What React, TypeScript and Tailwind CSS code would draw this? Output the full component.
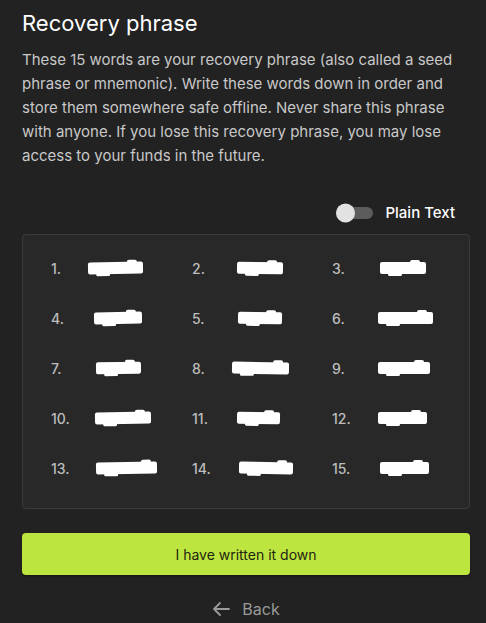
import { useState } from 'react'

// redacted words: [blob width, offset from number column start]
const WORDS: [number, number][] = [
  [55, 37], [46, 45], [46, 48],
  [48, 43], [44, 46], [55, 46],
  [45, 45], [57, 40], [52, 46],
  [56, 44], [43, 45], [49, 46],
  [61, 45], [54, 47], [49, 48],
]

function Blob({ w, ml, seed }: { w: number; ml: number; seed: number }) {
  const tilt = seed % 3 === 0 ? '-rotate-1' : seed % 3 === 1 ? 'rotate-1' : ''
  return (
    <span className={`relative block h-[12px] bg-white rounded-[2px] ${tilt}`} style={{ width: w, marginLeft: ml }}>
      <span className="absolute -top-[2px] right-[6px] h-[4px] w-[10px] bg-white rounded-sm" />
      <span className="absolute -bottom-[2px] left-[8px] h-[3px] w-[14px] bg-white rounded-sm" />
    </span>
  )
}

export default function App() {
  const [plain, setPlain] = useState(false)

  return (
    <div className="min-h-[623px] bg-[#222222] pl-[22px] pr-[16px] pt-[9px] font-['Inter',sans-serif] text-white">
      <h1 className="text-[22px] leading-[28px] text-white">Recovery phrase</h1>
      <p className="mt-[11px] text-[15px] leading-[24px] text-[#c8c8c8]">
        These 15 words are your recovery phrase (also called a seed phrase or mnemonic). Write these words down in order and store them somewhere safe offline. Never share this phrase with anyone. If you lose this recovery phrase, you may lose access to your funds in the future.
      </p>

      <div className="mt-[35px] flex items-center justify-end gap-[12px] pr-[15px]">
        <button onClick={() => setPlain(!plain)} className="relative h-[12px] w-[37px] rounded-full bg-[#5c5c5c]">
          <span className={`absolute top-1/2 -translate-y-1/2 h-[19px] w-[19px] rounded-full bg-[#e2e2e2] ${plain ? 'left-[18px]' : 'left-0'}`} />
        </button>
        <span className="text-[15px] leading-[20px] font-medium text-white">Plain Text</span>
      </div>

      <div className="mt-[11px] rounded-[4px] border border-[#3b3b3b] bg-[#282828] pl-[28px] pt-[8px] pb-[15px]">
        <div className="grid grid-cols-[141px_140px_1fr]">
          {WORDS.map(([w, ml], i) => (
            <div key={i} className="flex h-[50px] items-center">
              <span className="w-0 text-[14px] font-medium text-[#bdbdbd] whitespace-nowrap">{i + 1}.</span>
              <Blob w={w} ml={ml} seed={i} />
            </div>
          ))}
        </div>
      </div>

      <button className="mt-[24px] flex h-[42px] w-full items-center justify-center rounded-[4px] bg-[#bce63f] text-[14px] text-[#1d2410] shadow-[0_1px_2px_rgba(0,0,0,0.4)]">
        I have written it down
      </button>

      <div className="mt-[24px] flex items-center justify-center gap-[12px] text-[#9a9a9a]">
        <svg width="18" height="16" viewBox="0 0 18 16" fill="none" stroke="currentColor" strokeWidth="1.8" strokeLinecap="round" strokeLinejoin="round">
          <path d="M17 8H2M8 2L2 8l6 6" />
        </svg>
        <span className="text-[16px] leading-[20px]">Back</span>
      </div>
    </div>
  )
}
